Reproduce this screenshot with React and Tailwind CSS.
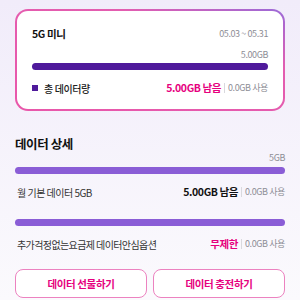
export default function App() {
  return (
    <div className="w-[300px] h-[300px] overflow-hidden bg-gradient-to-b from-[#f1ecfa] to-[#fbfafd] px-[15px] pt-[9px] font-['Noto_Sans_CJK_KR',sans-serif] tracking-[-0.4px]">
      {/* Summary card */}
      <div className="rounded-[13px] p-[2px] bg-[linear-gradient(200deg,#9b6ad8_0%,#e35db0_30%,#e957aa_100%)]">
        <div className="bg-white rounded-[11px] px-[15px] pt-[15px] pb-[13px]">
          <div className="flex items-center justify-between h-[16px]">
            <span className="text-[10.5px] font-bold text-[#111]">5G 미니</span>
            <span className="text-[9px] text-[#8d8d95]">05.03 ~ 05.31</span>
          </div>
          <div className="mt-[7px] h-[12px] flex items-center justify-end text-[9px] text-[#8d8d95]">5.00GB</div>
          <div className="mt-[2px] h-[7px] rounded-full bg-[#4f1a9b]" />
          <div className="mt-[10px] h-[16px] flex items-center justify-between">
            <div className="flex items-center gap-[6px]">
              <span className="w-[6px] h-[6px] bg-[#4f1a9b]" />
              <span className="text-[10px] font-medium text-[#222]">총 데이터량</span>
            </div>
            <div className="flex items-center">
              <span className="text-[10.5px] font-bold text-[#e6007e]">5.00GB 남음</span>
              <span className="mx-[3px] w-px h-[10px] bg-[#d9d9de]" />
              <span className="text-[9px] text-[#8d8d95]">0.0GB 사용</span>
            </div>
          </div>
        </div>
      </div>

      {/* Detail */}
      <div className="mt-[23px] h-[20px] flex items-center text-[12.5px] font-bold text-[#111]">데이터 상세</div>
      <div className="mt-[-2px] h-[12px] flex items-center justify-end text-[9px] text-[#8d8d95]">5GB</div>
      <div className="mt-[3px] h-[7px] rounded-full bg-[#8a5dd6]" />
      <div className="mt-[10px] h-[16px] flex items-center justify-between pl-[2px]">
        <span className="text-[10px] text-[#333] tracking-[-0.5px]">월 기본 데이터 5GB</span>
        <div className="flex items-center">
          <span className="text-[10.5px] font-bold text-[#111]">5.00GB 남음</span>
          <span className="mx-[3px] w-px h-[10px] bg-[#d9d9de]" />
          <span className="text-[9px] text-[#8d8d95]">0.0GB 사용</span>
        </div>
      </div>

      <div className="mt-[19px] h-[7px] rounded-full bg-[#8a5dd6]" />
      <div className="mt-[10px] h-[16px] flex items-center justify-between pl-[2px]">
        <span className="text-[10px] text-[#333] tracking-[-0.6px]">추가걱정없는요금제 데이터안심옵션</span>
        <div className="flex items-center">
          <span className="text-[10.5px] font-bold text-[#e6007e]">무제한</span>
          <span className="mx-[3px] w-px h-[10px] bg-[#d9d9de]" />
          <span className="text-[9px] text-[#8d8d95]">0.0GB 사용</span>
        </div>
      </div>

      <div className="mt-[17px] grid grid-cols-2 gap-[6px]">
        <button className="h-[29px] rounded-[8px] border border-[#ec82c0] bg-white text-[10.5px] font-bold text-[#e6007e]">
          데이터 선물하기
        </button>
        <button className="h-[29px] rounded-[8px] border border-[#ec82c0] bg-white text-[10.5px] font-bold text-[#e6007e]">
          데이터 충전하기
        </button>
      </div>
    </div>
  )
}
